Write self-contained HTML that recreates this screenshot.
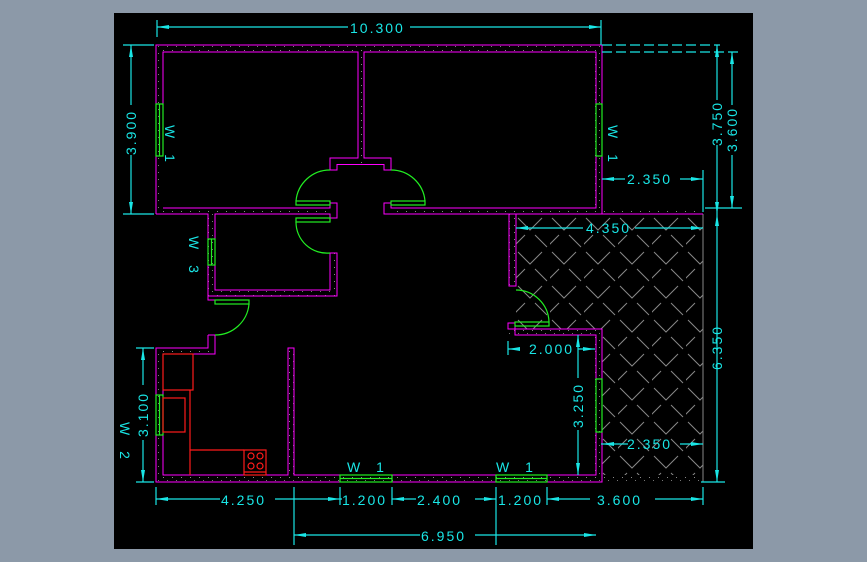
<!DOCTYPE html>
<html><head><meta charset="utf-8"><style>
html,body{margin:0;padding:0;width:867px;height:562px;overflow:hidden;background:#8c99a8}
svg{display:block}
text{font-family:"Liberation Sans",sans-serif;font-size:14px;fill:#19e6e6;letter-spacing:2px}
</style></head><body>
<svg width="867" height="562" viewBox="0 0 867 562" xmlns="http://www.w3.org/2000/svg">
<defs>
<pattern id="dots" width="9" height="7" patternUnits="userSpaceOnUse">
<rect x="1" y="1" width="1" height="1" fill="#888"/><rect x="5" y="4" width="1" height="1" fill="#777"/>
</pattern>
<pattern id="hatch" width="34" height="34" patternUnits="userSpaceOnUse" x="516" y="214">
<path d="M2 4 L14 16 L26 4 M19 21 L31 33 M-15 21 L-3 33 L9 21" stroke="#888" stroke-width="1" fill="none"/>
<path d="M36 4 L48 16" stroke="#888" fill="none"/>
</pattern>
</defs>
<rect x="114" y="13" width="639" height="536" fill="#000"/>
<rect x="516" y="214" width="187" height="115" fill="url(#hatch)"/>
<rect x="602" y="329" width="101" height="146" fill="url(#hatch)"/>
<line x1="703" y1="214" x2="703" y2="482" stroke="#888"/>
<g fill="url(#dots)">
<rect x="156" y="45" width="446" height="7"/>
<rect x="156" y="45" width="7" height="169"/>
<rect x="358" y="52" width="6" height="112"/>
<rect x="595" y="45" width="7" height="169"/>
<rect x="156" y="208" width="174" height="6"/>
<rect x="391" y="208" width="312" height="6"/>
<rect x="208" y="214" width="7" height="82"/>
<rect x="215" y="290" width="122" height="6"/>
<rect x="330" y="253" width="7" height="43"/>
<rect x="509" y="214" width="7" height="72"/>
<rect x="156" y="348" width="59" height="6"/>
<rect x="156" y="348" width="7" height="134"/>
<rect x="288" y="348" width="6" height="127"/>
<rect x="156" y="475" width="547" height="7"/>
<rect x="508" y="329" width="94" height="6"/>
<rect x="595" y="329" width="7" height="150"/>
</g>
<g stroke="#ff00ff" stroke-width="1" fill="none">
<path d="M156 214 V45 H602 V214"/>
<path d="M163 104 V52 H358 V158 H330 V170 H337 V164.5 H384 V170 H391 V158 H364 V52 H596 V208 H391 V203 H384 V214 H703"/>
<path d="M163 208 H330 V203 H337 V218 H330 V214 H215 V290 H330 V253 H337 V296 H208 V214 H156"/>
<path d="M215 300 H208 V296"/>
<path d="M208 335 H215 V354 H163 V475 H288 V348 H294 V475 H596 V335 H515 V323 H508 V329 H602 V482 H156 V348 H208 V335"/>
<path d="M509 214 V286 H516 V214"/>
<path d="M163 104 V156"/>
</g>
<g stroke="#22ee22" stroke-width="1.2" fill="none">
<rect x="156" y="104" width="7" height="52"/><line x1="159.5" y1="104" x2="159.5" y2="156"/>
<rect x="596" y="104" width="6" height="52"/>
<rect x="208" y="239" width="7" height="26"/><line x1="211.5" y1="239" x2="211.5" y2="265"/>
<rect x="156" y="395" width="7" height="40"/><line x1="159.5" y1="395" x2="159.5" y2="435"/>
<rect x="596" y="379" width="6" height="53"/>
<rect x="340" y="475" width="52" height="7"/><line x1="340" y1="478.5" x2="392" y2="478.5"/>
<rect x="496" y="475" width="51" height="7"/><line x1="496" y1="478.5" x2="547" y2="478.5"/>
<rect x="296" y="201" width="34" height="4"/>
<path d="M296 201 A34 34 0 0 1 330 170"/>
<rect x="391" y="201" width="34" height="4"/>
<path d="M391 170 A34 34 0 0 1 425 201"/>
<rect x="296" y="218" width="34" height="4"/>
<path d="M296 222 A31 31 0 0 0 330 253"/>
<rect x="215" y="300" width="34" height="4"/>
<path d="M249 304 A34 34 0 0 1 215 335"/>
<rect x="515" y="322" width="34" height="4"/>
<path d="M516 290 A33 33 0 0 1 549 322"/>
</g>
<g stroke="#ff1a1a" stroke-width="1.2" fill="none">
<rect x="163" y="354" width="30" height="36"/>
<rect x="163" y="398" width="22" height="34"/>
<line x1="190" y1="390" x2="190" y2="475"/>
<line x1="190" y1="450" x2="244" y2="450"/>
<rect x="244" y="450" width="22" height="25"/>
<line x1="244" y1="472" x2="266" y2="472"/>
<circle cx="251" cy="456" r="3"/><circle cx="260" cy="456" r="3"/>
<circle cx="251" cy="466" r="3"/><circle cx="260" cy="466" r="3"/>
</g>
<g stroke="#19e6e6" stroke-width="1.2" fill="none">
<path d="M157 27 H348 M410 27 H601 M157 20 V37 M601 20 V45"/>
<path d="M123 45 H154 M123 214 H154 M131 45 V105 M131 155 V214"/>
<path d="M602 45 H720 M602 52 H740" stroke-dasharray="10 4"/>
<path d="M717 45 V100 M717 145 V482 M732 52 V105 M732 155 V208 M705 208 H742"/>
<path d="M602 179 H625 M680 179 H703 M703 170 V212" />
<path d="M516 228 H583 M635 228 H703"/>
<path d="M508 341 V355 M508 349 H515 M578 349 H595 M578 335 V378 M578 430 V475"/>
<path d="M601 444 H628 M680 444 H703"/>
<path d="M701 482 H725"/>
<path d="M143 348 V385 M143 440 V482 M136 348 H154 M136 482 H154"/>
<path d="M156 487 V505 M294 487 V545 M340 487 V505 M392 487 V505 M496 487 V545 M547 487 V505 M703 487 V505"/>
<path d="M156 499 H220 M275 499 H342 M392 499 H416 M475 499 H496 M547 499 H590 M655 499 H703"/>
<path d="M294 535 H420 M475 535 H596"/>
</g>
<g fill="#19e6e6">
<path d="M157 27 l12 -2 v4z M601 27 l-12 -2 v4z"/>
<path d="M131 45 l-2 12 h4z M131 214 l-2 -12 h4z"/>
<path d="M717 45 l-2 12 h4z M717 214 l-2 -12 h4z M717 214 l-2 12 h4z M717 482 l-2 -12 h4z"/>
<path d="M732 52 l-2 12 h4z M732 208 l-2 -12 h4z"/>
<path d="M602 179 l12 -2 v4z M703 179 l-12 -2 v4z M516 228 l12 -2 v4z M703 228 l-12 -2 v4z"/>
<path d="M508 349 l12 -2 v4z M595 349 l-12 -2 v4z M578 335 l-2 12 h4z M578 475 l-2 -12 h4z"/>
<path d="M602 444 l12 -2 v4z M703 444 l-12 -2 v4z"/>
<path d="M143 348 l-2 12 h4z M143 482 l-2 -12 h4z"/>
<path d="M156 499 l12 -2 v4z M340 499 l-12 -2 v4z M392 499 l12 -2 v4z M496 499 l-12 -2 v4z M547 499 l12 -2 v4z M703 499 l-12 -2 v4z"/>
<path d="M294 535 l12 -2 v4z M596 535 l-12 -2 v4z"/>
</g>
<text x="350" y="33">10.300</text>
<text x="221" y="505">4.250</text>
<text x="342" y="505">1.200</text>
<text x="417" y="505">2.400</text>
<text x="498" y="505">1.200</text>
<text x="597" y="505">3.600</text>
<text x="421" y="541">6.950</text>
<text x="627" y="184">2.350</text>
<text x="586" y="233">4.350</text>
<text x="529" y="354">2.000</text>
<text x="627" y="449">2.350</text>
<text x="347" y="472" style="letter-spacing:6px">W 1</text>
<text x="496" y="472" style="letter-spacing:6px">W 1</text>
<text transform="translate(136,155) rotate(-90)">3.900</text>
<text transform="translate(722,146) rotate(-90)">3.750</text>
<text transform="translate(737,152) rotate(-90)">3.600</text>
<text transform="translate(722,370) rotate(-90)">6.350</text>
<text transform="translate(583,428) rotate(-90)">3.250</text>
<text transform="translate(148,437) rotate(-90)">3.100</text>
<text transform="translate(165,125) rotate(90)" style="letter-spacing:6px">W 1</text>
<text transform="translate(608,125) rotate(90)" style="letter-spacing:6px">W 1</text>
<text transform="translate(189,236) rotate(90)" style="letter-spacing:6px">W 3</text>
<text transform="translate(120,422) rotate(90)" style="letter-spacing:6px">W 2</text>
</svg>
</body></html>
